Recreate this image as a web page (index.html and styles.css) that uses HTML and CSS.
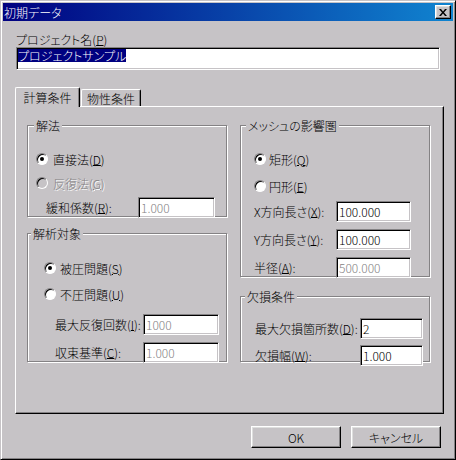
FILE: index.html
```html
<!DOCTYPE html>
<html lang="ja">
<head>
    <meta charset="UTF-8">
    <title>初期データ</title>
    <link rel="stylesheet" href="styles.css">
</head>
<body>
    <div class="window">
        <div class="titlebar">
            <span class="title">初期データ</span>
            <span class="close-btn">
                <svg width="8" height="7" viewBox="0 0 8 7">
                    <path d="M0 0h2l2 2.5 2-2.5h2l-3 3.5 3 3.5h-2l-2-2.5-2 2.5h-2l3-3.5z" fill="#000"/>
                </svg>
            </span>
        </div>

        <div class="dialog">
            <div class="name-label">プロジェクト名(<u>P</u>)</div>
            <div class="edit name-edit"><span class="selected">プロジェクトサンプル</span></div>

            <div class="tabs">
                <div class="tab active">計算条件</div>
                <div class="tab inactive">物性条件</div>
            </div>

            <div class="tab-panel">
                <div class="column left">
                    <div class="group method">
                        <div class="group-title">解法</div>
                        <div class="radio">
                            <span class="radio-box checked"></span>
                            <span>直接法(<u>D</u>)</span>
                        </div>
                        <div class="radio disabled">
                            <span class="radio-box"></span>
                            <span>反復法(<u>G</u>)</span>
                        </div>
                        <div class="field">
                            <label>緩和係数(<u>R</u>):</label>
                            <div class="edit off">1.000</div>
                        </div>
                    </div>

                    <div class="group target">
                        <div class="group-title">解析対象</div>
                        <div class="radio">
                            <span class="radio-box checked"></span>
                            <span>被圧問題(<u>S</u>)</span>
                        </div>
                        <div class="radio">
                            <span class="radio-box"></span>
                            <span>不圧問題(<u>U</u>)</span>
                        </div>
                        <div class="field">
                            <label>最大反復回数(<u>I</u>):</label>
                            <div class="edit off">1000</div>
                        </div>
                        <div class="field">
                            <label>収束基準(<u>C</u>):</label>
                            <div class="edit off">1.000</div>
                        </div>
                    </div>
                </div>

                <div class="column right">
                    <div class="group mesh">
                        <div class="group-title">メッシュの影響圏</div>
                        <div class="radio">
                            <span class="radio-box checked"></span>
                            <span>矩形(<u>Q</u>)</span>
                        </div>
                        <div class="radio">
                            <span class="radio-box"></span>
                            <span>円形(<u>E</u>)</span>
                        </div>
                        <div class="field">
                            <label>X方向長さ(<u>X</u>):</label>
                            <div class="edit">100.000</div>
                        </div>
                        <div class="field">
                            <label>Y方向長さ(<u>Y</u>):</label>
                            <div class="edit">100.000</div>
                        </div>
                        <div class="field">
                            <label>半径(<u>A</u>):</label>
                            <div class="edit off">500.000</div>
                        </div>
                    </div>

                    <div class="group defect">
                        <div class="group-title">欠損条件</div>
                        <div class="field">
                            <label>最大欠損箇所数(<u>D</u>):</label>
                            <div class="edit">2</div>
                        </div>
                        <div class="field">
                            <label>欠損幅(<u>W</u>):</label>
                            <div class="edit">1.000</div>
                        </div>
                    </div>
                </div>
            </div>

            <div class="buttons">
                <div class="button">OK</div>
                <div class="button">キャンセル</div>
            </div>
        </div>
    </div>
</body>
</html>
```

FILE: styles.css
```css
* {
    box-sizing: border-box;
}

body {
    margin: 0;
    background-color: #c6c3c6;
    font-family: "Noto Sans CJK JP", sans-serif;
    font-size: 12px;
    font-weight: 300;
    font-feature-settings: "palt";
    color: #000;
}

u {
    text-underline-offset: 0;
}

.window {
    width: 456px;
    height: 460px;
    padding: 2px;
    border: 1px solid;
    border-color: #c6c3c6 #000 #000 #c6c3c6;
    box-shadow: inset 1px 1px 0 #fff, inset -1px -1px 0 #848284;
}

.titlebar {
    height: 18px;
    display: flex;
    align-items: center;
    justify-content: space-between;
    padding: 0 2px 0 1px;
    background: linear-gradient(to right, #000080, #1084d0);
    color: #fff;
}

.close-btn {
    width: 16px;
    height: 14px;
    display: flex;
    align-items: center;
    justify-content: center;
    background-color: #c6c3c6;
    border: 1px solid;
    border-color: #fff #000 #000 #fff;
    box-shadow: inset -1px -1px 0 #848284, inset 1px 1px 0 #dedfde;
}

.dialog {
    padding: 12px 9px 0 12px;
}

.name-label {
    height: 14px;
    line-height: 14px;
    margin-left: 1px;
}

/* sunken edit box */
.edit {
    background-color: #fff;
    border: 1px solid;
    border-color: #848284 #fff #fff #848284;
    box-shadow: inset 1px 1px 0 #000, inset -1px -1px 0 #c6c3c6;
    padding: 1px 1px 1px 2px;
    height: 21px;
    line-height: 17px;
    white-space: nowrap;
}

.edit.off {
    color: #848284;
}

.name-edit {
    margin-left: 1px;
    width: 424px;
    height: 23px;
    padding: 1px;
}

.selected {
    display: inline-block;
    background-color: #000080;
    color: #fff;
    line-height: 13px;
    vertical-align: top;
}

.tabs {
    display: flex;
    align-items: flex-end;
    height: 19px;
    margin-top: 17px;
}

.tab {
    height: 17px;
    display: flex;
    align-items: center;
    justify-content: center;
    border: 1px solid;
    border-color: #fff #000 transparent #fff;
    border-bottom: none;
    border-radius: 2px 2px 0 0;
    box-shadow: inset -1px 0 0 #848284;
}

.tab.active {
    width: 65px;
    height: 20px;
    margin-bottom: -1px;
    position: relative;
    z-index: 1;
    background-color: #c6c3c6;
}

.tab.inactive {
    width: 60px;
    margin-left: 1px;
}

.tab-panel {
    height: 308px;
    display: flex;
    gap: 13px;
    padding: 18px 0 0 11px;
    border: 1px solid;
    border-color: #fff #000 #000 #fff;
    box-shadow: inset -1px -1px 0 #848284;
}

.column {
    display: flex;
    flex-direction: column;
}

.column.left {
    width: 200px;
}

.column.right {
    width: 190px;
}

/* etched group box */
.group {
    border: 1px solid #848284;
    box-shadow: 1px 1px 0 #fff, inset 1px 1px 0 #fff;
}

.group-title {
    display: inline-block;
    margin-top: -7px;
    padding: 0 2px;
    line-height: 13px;
    background-color: #c6c3c6;
    vertical-align: top;
}

.radio {
    height: 14px;
    display: flex;
    align-items: center;
    gap: 5px;
}

.radio-box {
    width: 12px;
    height: 12px;
    border-radius: 50%;
    background-color: #fff;
    border: 1px solid;
    border-color: #848284 #fff #fff #848284;
    box-shadow: inset 1px 1px 0 #000;
    display: flex;
    align-items: center;
    justify-content: center;
}

.radio-box.checked::after {
    content: "";
    width: 4px;
    height: 4px;
    border-radius: 50%;
    background-color: #000;
}

.radio.disabled {
    color: #848284;
    text-shadow: 1px 1px 0 #fff;
}

.radio.disabled .radio-box {
    background-color: #c6c3c6;
}

.field {
    height: 21px;
    display: flex;
    align-items: center;
}

.field label {
    white-space: nowrap;
}

/* 解法 */
.method {
    height: 92px;
}

.method .group-title {
    margin-left: 6px;
}

.method .radio {
    margin: 9px 0 0 8px;
}

.method .radio + .radio {
    margin-top: 10px;
}

.method .field {
    margin: 7px 0 0 18px;
}

.method label {
    width: 92px;
}

.method .edit {
    width: 77px;
}

/* 解析対象 */
.target {
    height: 129px;
    margin-top: 16px;
}

.target .group-title {
    margin-left: 3px;
}

.target .radio {
    margin: 10px 0 0 16px;
    gap: 4px;
}

.target .radio + .radio {
    margin-top: 12px;
}

.target .field {
    margin: 13px 0 0 27px;
}

.target .field + .field {
    margin-top: 7px;
}

.target label {
    width: 88px;
}

.target .edit {
    width: 76px;
}

/* メッシュの影響圏 */
.mesh {
    height: 152px;
}

.mesh .group-title {
    margin-left: 5px;
}

.mesh .radio {
    margin: 9px 0 0 13px;
    gap: 3px;
}

.mesh .radio + .radio {
    margin-top: 13px;
}

.mesh .field {
    margin: 8px 0 0 13px;
}

.mesh .field + .field {
    margin-top: 7px;
}

.mesh label {
    width: 82px;
}

.mesh .edit {
    width: 75px;
}

/* 欠損条件 */
.defect {
    height: 66px;
    margin-top: 19px;
}

.defect .group-title {
    margin-left: 4px;
}

.defect .field {
    margin: 4px 0 0 14px;
}

.defect .field + .field {
    margin-top: 6px;
}

.defect label {
    width: 105px;
}

.defect .edit {
    width: 63px;
}

.buttons {
    display: flex;
    justify-content: flex-end;
    gap: 10px;
    margin: 12px 3px 0 0;
}

.button {
    width: 90px;
    height: 22px;
    display: flex;
    align-items: center;
    justify-content: center;
    border: 1px solid;
    border-color: #fff #000 #000 #fff;
    box-shadow: inset -1px -1px 0 #848284, inset 1px 1px 0 #dedfde;
}
```
